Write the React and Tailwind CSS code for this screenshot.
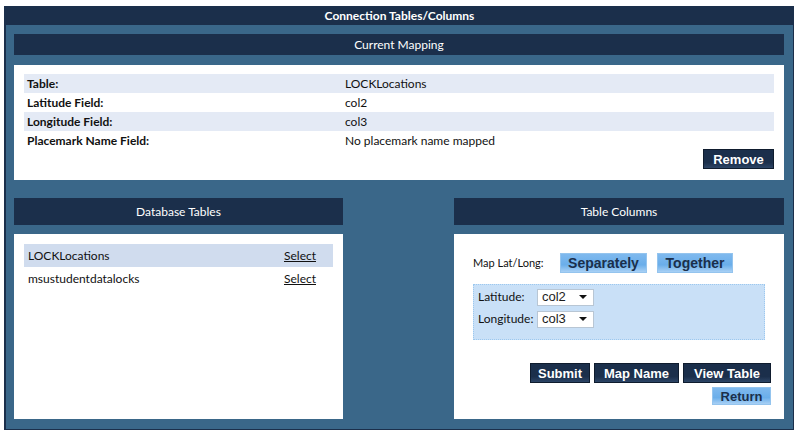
import React from "react";

const font = { fontFamily: "Lato, 'Open Sans', sans-serif" };

const DarkButton = ({ children, className = "" }) => (
  <button
    className={`h-[20px] bg-[linear-gradient(#1b2f4b_0%,#1b2f4b_70%,#2d4566_100%)] border border-[#0f1c2e] text-white font-bold text-[13px] leading-none [font-family:'Liberation_Sans',Arial,sans-serif] ${className}`}
  >
    {children}
  </button>
);

const BlueButton = ({ children, className = "" }) => (
  <button
    className={`bg-[linear-gradient(#7fb9ee_0%,#6aaeea_60%,#a8d0f5_100%)] border border-[#94c4ee] text-[#1b2f4b] font-bold leading-none [font-family:'Liberation_Sans',Arial,sans-serif] ${className}`}
  >
    {children}
  </button>
);

const Header = ({ children, className = "" }) => (
  <div
    className={`bg-[#1b2f4b] text-white text-[12px] flex items-center justify-center ${className}`}
  >
    {children}
  </div>
);

const Select = ({ value }) => (
  <div className="w-[57px] h-[17px] bg-white border border-[#b8c6d4] flex items-center justify-between pl-[4px] pr-[6px] text-[13px] text-[#1b1b1b] [font-family:'Liberation_Sans',Arial,sans-serif]">
    <span>{value}</span>
    <svg width="8" height="5" viewBox="0 0 8 5">
      <path d="M0 0 L8 0 L4 4 Z" fill="#111" />
    </svg>
  </div>
);

export default function App() {
  const mapping = [
    ["Table:", "LOCKLocations", true],
    ["Latitude Field:", "col2", false],
    ["Longitude Field:", "col3", true],
    ["Placemark Name Field:", "No placemark name mapped", false],
  ];

  return (
    <div className="w-[800px] h-[436px] bg-white pt-[6px] pl-[4px]" style={font}>
      <div className="w-[790px] border border-[#1b2f4b] border-l-2 bg-[#3a6789]">
        <div className="h-[18px] bg-[#1b2f4b] text-white font-bold text-[12px] flex items-center justify-center">
          Connection Tables/Columns
        </div>

        <div className="pl-[8px] pr-[9px] pt-[9px] pb-[10px]">
          <Header className="h-[21px]">Current Mapping</Header>

          <div className="mt-[10px] bg-white px-[10px] pt-[9px] pb-[11px] text-[12px] text-[#111]">
            {mapping.map(([label, value, shaded]) => (
              <div
                key={label}
                className={`h-[19px] flex items-center ${shaded ? "bg-[#e4eaf5]" : ""}`}
              >
                <span className="w-[321px] pl-[3px] font-bold">{label}</span>
                <span>{value}</span>
              </div>
            ))}
            <div className="flex justify-end -mt-[1px]">
              <DarkButton className="w-[71px]">Remove</DarkButton>
            </div>
          </div>

          <div className="mt-[18px] flex justify-between">
            <div className="w-[329px]">
              <Header className="h-[27px]">Database Tables</Header>
              <div className="mt-[9px] h-[185px] bg-white p-[10px] text-[12px] text-[#111]">
                <div className="h-[23px] bg-[#d0dcee] flex items-center justify-between pl-[4px] pr-[17px]">
                  <span>LOCKLocations</span>
                  <span className="underline">Select</span>
                </div>
                <div className="h-[23px] flex items-center justify-between pl-[4px] pr-[17px]">
                  <span>msustudentdatalocks</span>
                  <span className="underline">Select</span>
                </div>
              </div>
            </div>

            <div className="w-[330px]">
              <Header className="h-[27px]">Table Columns</Header>
              <div className="mt-[9px] h-[185px] bg-white pl-[19px] pr-[13px] pt-[19px] text-[12px] text-[#111]">
                <div className="flex items-center">
                  <span className="w-[87px] text-[11px]">Map Lat/Long:</span>
                  <BlueButton className="w-[87px] h-[20px] text-[14px]">Separately</BlueButton>
                  <BlueButton className="ml-[10px] w-[76px] h-[20px] text-[14px]">Together</BlueButton>
                </div>

                <div className="mt-[11px] mr-[6px] h-[56px] bg-[#c9e0f7] border border-dotted border-[#9cc8ef] pl-[4px] pt-[3px]">
                  <div className="flex items-center">
                    <span className="w-[59px]">Latitude:</span>
                    <Select value="col2" />
                  </div>
                  <div className="flex items-center mt-[4px]">
                    <span className="w-[59px]">Longitude:</span>
                    <Select value="col3" />
                  </div>
                </div>

                <div className="mt-[23px] flex justify-end gap-[4px]">
                  <DarkButton className="w-[60px]">Submit</DarkButton>
                  <DarkButton className="w-[85px]">Map Name</DarkButton>
                  <DarkButton className="w-[88px]">View Table</DarkButton>
                </div>
                <div className="mt-[4px] flex justify-end">
                  <BlueButton className="w-[59px] h-[18px] text-[13px]">Return</BlueButton>
                </div>
              </div>
            </div>
          </div>
        </div>
      </div>
    </div>
  );
}
